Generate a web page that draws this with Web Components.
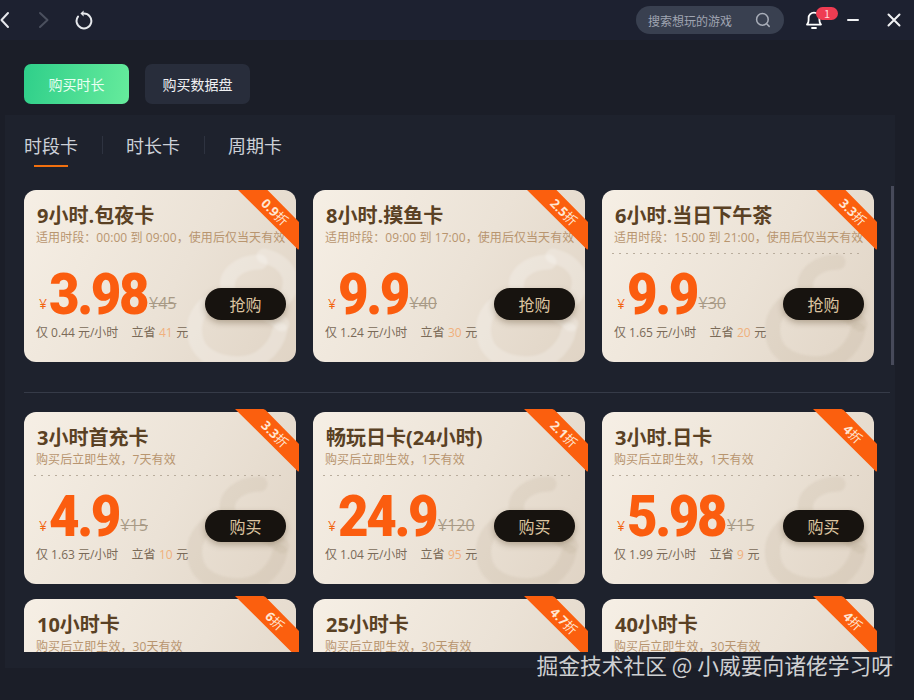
<!DOCTYPE html>
<html lang="zh">
  <head>
    <meta charset="UTF-8" />
    <title>购买时长</title>
    <style>
      html, body { margin: 0; height: 100%; overflow: hidden; background: #1b1e28; }
      body { font-family: "Noto Sans CJK SC", "Liberation Sans", sans-serif; }
      app-shell { width: 914px; height: 700px; }
    </style>
    <script>
      const define = (name, html) =>
        customElements.define(
          name,
          class extends HTMLElement {
            constructor() {
              super();
              this.attachShadow({ mode: "open" }).innerHTML = html;
            }
          }
        );

      define("app-shell", `
        <style>
          :host { display: flex; flex-direction: column; position: relative; color: #fff; }
          .mark { position: absolute; right: 21px; top: 650px; font-size: 21.75px; line-height: 30px; color: #cfd0d2; white-space: nowrap; }
        </style>
        <slot></slot>
        <div class="mark">掘金技术社区 @ 小威要向诸佬学习呀</div>
      `);

      define("title-bar", `
        <style>
          :host { display: flex; align-items: center; height: 40px; background: #1d2130; flex: none; }
          svg { display: block; flex: none; fill: none; stroke-linecap: round; stroke-linejoin: round; }
          .back { margin-left: -1px; stroke: #e6e8ec; stroke-width: 2; }
          .next { margin-left: 27px; stroke: #4b505e; stroke-width: 2; }
          .reload { margin-left: 25px; stroke: #e6e8ec; stroke-width: 2; }
          .reload path + path { fill: #e6e8ec; stroke: none; }
          .search { margin-left: auto; display: flex; align-items: center; width: 148px; height: 28px; box-sizing: border-box; padding: 0 13px 0 12px; border-radius: 14px; background: #394050; font-size: 12px; color: #a0a5b2; }
          .search svg { margin-left: auto; stroke: #a9aeb9; stroke-width: 1.5; }
          .bell { margin-left: 21px; width: 36px; height: 28px; position: relative; }
          .bell svg { stroke: #fff; stroke-width: 1.8; margin-top: 4px; }
          .badge { position: absolute; left: 11px; top: 1px; width: 22px; height: 13px; border-radius: 7px; background: #ef3c52; font-size: 11px; line-height: 13px; text-align: center; color: #ffd9dc; }
          .min { margin-left: 6px; width: 12px; height: 2px; background: #f1f2f4; border-radius: 1px; }
          .close { margin-left: 28px; margin-right: 13px; stroke: #f1f2f4; stroke-width: 2; }
        </style>
        <svg class="back" width="12" height="18" viewBox="0 0 12 18"><path d="M9 2 2.5 9 9 16"/></svg>
        <svg class="next" width="12" height="18" viewBox="0 0 12 18"><path d="M2 2 9.5 9 2 16"/></svg>
        <svg class="reload" width="18" height="20" viewBox="0 0 18 20">
          <path d="M3 6.6a7.4 7.4 0 1 0 6-3"/><path d="M8.6 .6 5.4 3.6l3.2 3z"/>
        </svg>
        <div class="search">搜索想玩的游戏
          <svg width="16" height="16" viewBox="0 0 16 16"><circle cx="7.4" cy="7.4" r="5.8"/><path d="m11.6 11.8 2.6 2.6"/></svg>
        </div>
        <div class="bell">
          <svg width="18" height="20" viewBox="0 0 18 20">
            <path d="M2 14.6c1.4-1 1.6-2.6 1.6-4.6V8a5.4 5.4 0 0 1 10.8 0v2c0 2 .2 3.6 1.6 4.6z"/><path d="M7 18h4"/>
          </svg>
          <span class="badge">1</span>
        </div>
        <div class="min"></div>
        <svg class="close" width="14" height="14" viewBox="0 0 14 14"><path d="m1.5 1.5 11 11M12.5 1.5l-11 11"/></svg>
      `);

      define("buy-switch", `
        <style>
          :host { display: flex; gap: 16px; padding: 24px 0 11px 24px; flex: none; }
          div { width: 105px; height: 40px; border-radius: 7px; background: #282d3b; font-size: 14px; line-height: 40px; text-align: center; color: #f0f1f3; }
          .on { background: linear-gradient(100deg, #2fcf8a, #66eb9c); color: #e9fff2; }
        </style>
        <div class="on">购买时长</div>
        <div>购买数据盘</div>
      `);

      define("card-panel", `
        <style>
          :host { display: block; position: relative; margin-left: 5px; width: 890px; height: 553px; box-sizing: border-box; background: #1e222d; padding-top: 16px; flex: none; }
          nav { display: flex; align-items: center; padding-left: 19px; height: 28px; font-size: 18px; color: #cdd1d8; line-height: 28px; }
          nav span { width: 54px; position: relative; }
          nav i { width: 1px; height: 18px; background: #2e3340; margin: 0 23px 0 24px; }
          nav span.on::after { content: ""; position: absolute; left: 10px; top: 34px; width: 34px; height: 2px; background: #f2700f; }
          .scroll { height: 462px; margin-top: 31px; overflow: hidden; padding-left: 19px; }
          .thumb { position: absolute; right: 1px; top: 71px; width: 3px; height: 179px; background: #474a5a; }
        </style>
        <nav><span class="on">时段卡</span><i></i><span>时长卡</span><i></i><span>周期卡</span></nav>
        <div class="scroll"><slot></slot></div>
        <div class="thumb"></div>
      `);

      define("card-grid", `
        <style>
          :host { display: grid; grid-template-columns: repeat(3, 272px); column-gap: 17px; row-gap: 15px; }
        </style>
        <slot></slot>
      `);

      define("card-divider", `
        <style>
          :host { display: block; height: 1px; background: #363b48; margin: 30px 0 19px; width: 866px; }
        </style>
      `);

      const swirl = (light) => `<svg class="swirl" width="272" height="172" viewBox="0 0 272 172" fill="none" stroke-linecap="round">
        <path d="M236 72C216 72 200 84 204 100c4 16 36 16 54 34"/>
        <path d="M206 108c-26-2-40 20-34 42 6 22 42 30 64 18 12-8 18-18 20-28"/>
        ${light ? `<path d="M240 66c18 4 28 16 26 30-2 12-12 20-26 22"/>` : ""}
      </svg>`;

      customElements.define(
        "price-card",
        class extends HTMLElement {
          connectedCallback() {
            const a = (n) => this.getAttribute(n);
            const line = this.hasAttribute("dashed");
            const price = a("price") || "";
            this.attachShadow({ mode: "open" }).innerHTML = `
              <style>
                :host { display: block; position: relative; height: 172px; color: #7a6a58; font-family: "Open Sans", "Noto Sans CJK SC", sans-serif; --swirl: ${line ? "rgba(140,118,90,.09)" : "rgba(255,255,255,.24)"}; }
                .bg { position: absolute; inset: 0; border-radius: 12px; overflow: hidden; background: linear-gradient(120deg, #f6efe5 0%, #ebe2d6 55%, #e0d4c5 100%); }
                .swirl { stroke: var(--swirl); stroke-width: 15; display: block; filter: blur(1px); }
                .body { position: relative; display: flex; flex-direction: column; height: 100%; padding-left: 12px; }
                h3 { margin: 15px 0 0 1px; font-size: 20px; line-height: 22px; font-weight: 700; color: #5a4124; white-space: nowrap; }
                p { margin: 3px 0 0; font-size: 12px; line-height: 16px; letter-spacing: .07px; color: #b8956f; white-space: nowrap; }
                hr { margin: 7px 10px 0 -2px; height: 1px; border: 0; background: ${line ? "repeating-linear-gradient(90deg, #b9ad9d 0 2px, transparent 2px 7px)" : "none"}; }
                .row { display: flex; align-items: center; height: 32px; margin-top: 34px; padding-left: 3px; }
                .yen { font-size: 14px; color: #f2640f; line-height: 16px; }
                b { display: inline-block; font: 900 58px/32px Roboto, "Liberation Sans", sans-serif; letter-spacing: -2.6px; color: #fb5d0f; margin-left: 2px; margin-top: -20px; transform: scaleX(.91); transform-origin: left center; margin-right: ${-price.length * 2.5}px; }
                s { font-size: 16px; line-height: 18px; color: #a89a86; margin-left: 2px; margin-top: -2px; }
                button { margin: 0 10px 0 auto; width: 81px; height: 32px; border: 0; padding: 0; border-radius: 16px; background: #17130f; color: #dcc4a0; font: 16px/32px "Noto Sans CJK SC", sans-serif; box-shadow: 0 3px 6px rgba(90,70,40,.35); }
                .foot { display: flex; font-size: 12px; line-height: 16px; margin-top: 5px; white-space: pre; }
                .foot span + span { margin-left: 13px; word-spacing: .5px; }
                em { font-style: normal; color: #f0b07c; }
                .rib { position: absolute; left: 211px; top: -3px; width: 64px; height: 63px; }
                .rib svg { display: block; }
                .rib span { position: absolute; left: 40px; top: 25px; transform: translate(-50%, -50%) rotate(45deg); font-size: 13px; line-height: 16px; color: #ffe6d2; white-space: nowrap; }
                .rib strong { font-weight: 700; }
              </style>
              <div class="bg">${swirl(!line)}</div>
              <div class="body">
                <h3>${a("name")}</h3>
                <p>${a("note")}</p>
                <hr />
                ${price ? `
                <div class="row">
                  <span class="yen">¥</span><b>${price}</b><s>¥${a("was")}</s>
                  <button>${a("btn")}</button>
                </div>
                <div class="foot"><span>仅 ${a("per")} 元/小时</span><span>立省 <em>${a("save")}</em> 元</span></div>` : ""}
              </div>
              <div class="rib">
                <svg width="64" height="63" viewBox="0 0 64 63"><path d="M0 0C4 0 8 0 27 0c2 0 3 .5 4 1.5L64 35V61c0 2-1 2-2 .5z" fill="#fb5f0e"/></svg>
                <span><strong>${a("off")}</strong>折</span>
              </div>`;
          }
        }
      );
    </script>
  </head>
  <body>
    <app-shell>
      <title-bar></title-bar>
      <buy-switch></buy-switch>
      <card-panel>
        <card-grid>
          <price-card name="9小时.包夜卡" note="适用时段：00:00 到 09:00，使用后仅当天有效" price="3.98" was="45" per="0.44" save="41" off="0.9" btn="抢购"></price-card>
          <price-card name="8小时.摸鱼卡" note="适用时段：09:00 到 17:00，使用后仅当天有效" price="9.9" was="40" per="1.24" save="30" off="2.5" btn="抢购"></price-card>
          <price-card dashed name="6小时.当日下午茶" note="适用时段：15:00 到 21:00，使用后仅当天有效" price="9.9" was="30" per="1.65" save="20" off="3.3" btn="抢购"></price-card>
        </card-grid>
        <card-divider></card-divider>
        <card-grid>
          <price-card dashed name="3小时首充卡" note="购买后立即生效，7天有效" price="4.9" was="15" per="1.63" save="10" off="3.3" btn="购买"></price-card>
          <price-card dashed name="畅玩日卡(24小时)" note="购买后立即生效，1天有效" price="24.9" was="120" per="1.04" save="95" off="2.1" btn="购买"></price-card>
          <price-card dashed name="3小时.日卡" note="购买后立即生效，1天有效" price="5.98" was="15" per="1.99" save="9" off="4" btn="购买"></price-card>
          <price-card dashed name="10小时卡" note="购买后立即生效，30天有效" off="6"></price-card>
          <price-card dashed name="25小时卡" note="购买后立即生效，30天有效" off="4.7"></price-card>
          <price-card dashed name="40小时卡" note="购买后立即生效，30天有效" off="4"></price-card>
        </card-grid>
      </card-panel>
    </app-shell>
  </body>
</html>
